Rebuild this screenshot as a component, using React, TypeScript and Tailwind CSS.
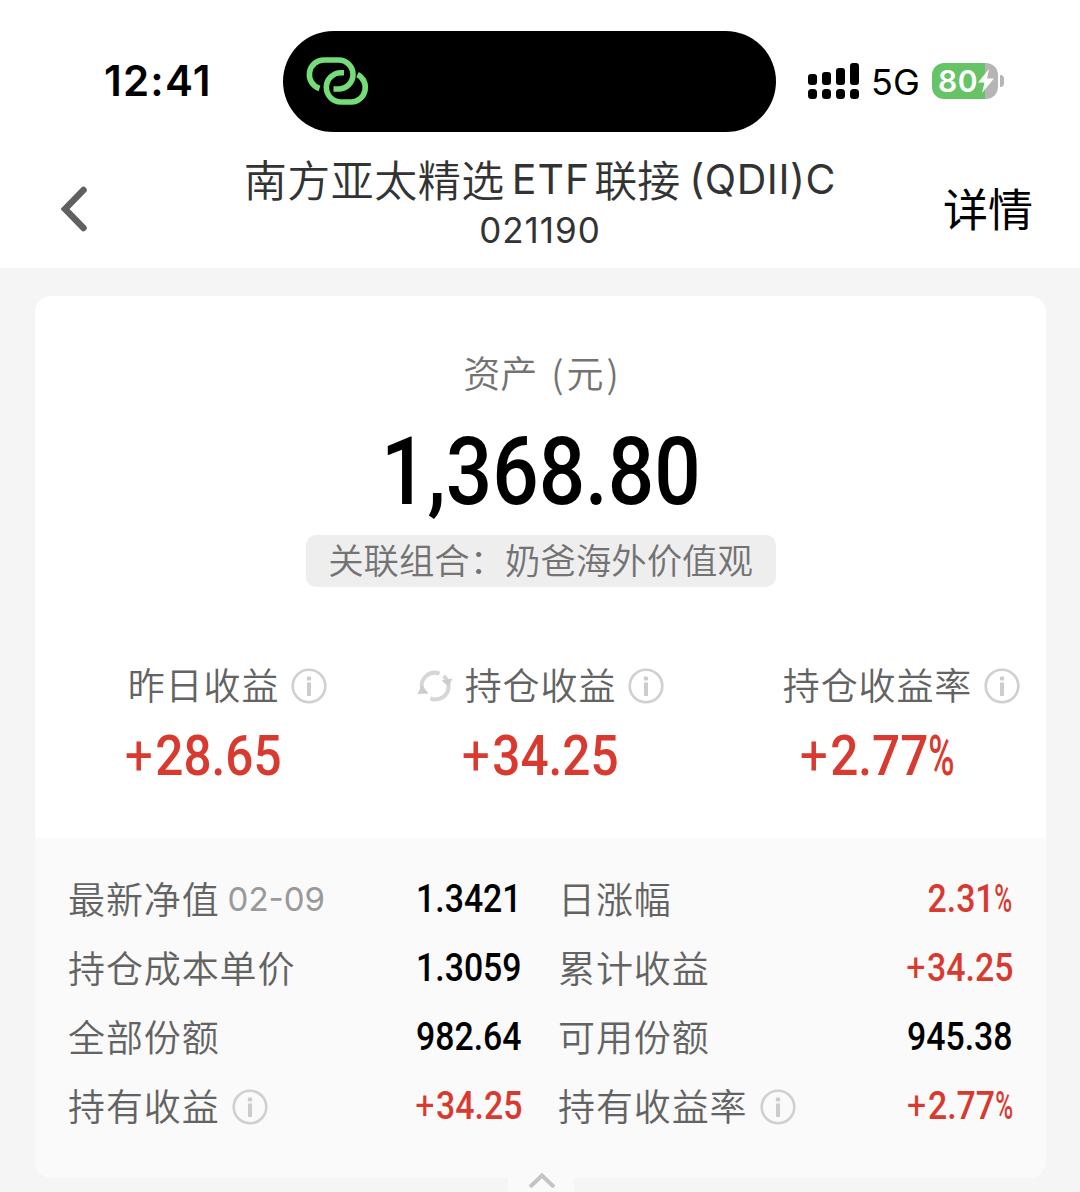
import type { ReactNode } from "react";
import clsx from "clsx";

const metrics = [
  { label: "昨日收益", value: "+28.65", refresh: false },
  { label: "持仓收益", value: "+34.25", refresh: true },
  { label: "持仓收益率", value: "+2.77%", refresh: false },
];

const details = [
  { label: "最新净值", date: "02-09", value: "1.3421" },
  { label: "日涨幅", value: "2.31%", red: true },
  { label: "持仓成本单价", value: "1.3059" },
  { label: "累计收益", value: "+34.25", red: true },
  { label: "全部份额", value: "982.64" },
  { label: "可用份额", value: "945.38" },
  { label: "持有收益", value: "+34.25", red: true, info: true },
  { label: "持有收益率", value: "+2.77%", red: true, info: true },
];

function InfoIcon() {
  return (
    <svg viewBox="0 0 36 36" className="h-9 w-9 shrink-0" fill="none">
      <circle cx="18" cy="18" r="16.3" stroke="#d0d0d0" strokeWidth="2.6" />
      <circle cx="18" cy="10.5" r="2.3" fill="#cccccc" />
      <path d="M16 14.5h4v13.5h-4z" fill="#cccccc" />
    </svg>
  );
}

function RefreshIcon() {
  return (
    <svg viewBox="0 0 36 36" className="h-9 w-9 shrink-0" fill="none">
      <path
        d="M5.4 22A13 13 0 0 1 22.5 5.7"
        stroke="#d6d6d6"
        strokeWidth="4"
      />
      <path
        d="M26.5 8A13 13 0 0 1 13.5 30.3"
        stroke="#d6d6d6"
        strokeWidth="4"
      />
      <path d="M24.5 12.5 35.5 10.5 31.5 18.5z" fill="#cccccc" />
      <path d="M11.5 25.5 .5 26 5 17z" fill="#cccccc" />
    </svg>
  );
}

function LinkIcon() {
  return (
    <svg
      viewBox="0 0 62 50"
      className="h-[50px] w-[62px] overflow-visible"
      fill="none"
      stroke="#74dd78"
      strokeWidth="5.6"
    >
      <path d="M12.5 31.5A14.6 14.6 0 0 1 17 3H31.5A14.5 14.5 0 0 1 31.5 32H26.5" />
      <path d="M37 15.7H34A14.6 14.6 0 0 0 34 45H44.5A14.6 14.6 0 0 0 50.5 17.5" />
    </svg>
  );
}

function Amount({ value, className }: { value: string; className?: string }) {
  const signed = value.startsWith("+");
  const percent = value.endsWith("%");
  const digits = value.replace("+", "").replace("%", "");

  return (
    <span
      className={clsx(
        "inline-block whitespace-nowrap font-['Roboto',sans-serif] font-medium",
        className,
      )}
    >
      {signed && <span className="mr-[0.05em] font-normal">+</span>}
      {digits}
      {percent && (
        <span className="-mr-[0.2em] inline-block origin-left scale-x-72">
          %
        </span>
      )}
    </span>
  );
}

function Label({ children }: { children: ReactNode }) {
  return (
    <span className="relative -top-0.5 whitespace-nowrap text-[37px] leading-[54px] font-[350] tracking-[0.9px] text-[#636363]">
      {children}
    </span>
  );
}

function StatusBar() {
  return (
    <div className="flex h-[132px] pt-[31px]">
      <div className="w-[283px] pt-[25px] pl-[104px] font-['Inter',sans-serif] text-[42px] leading-[50px] font-semibold tracking-[1.2px] text-black">
        12:41
      </div>
      <div className="h-[101px] w-[493px] rounded-full bg-black pt-[26px] pl-6">
        <LinkIcon />
      </div>
      <div className="flex h-[99px] items-center pl-8">
        <svg viewBox="0 0 51 36" className="h-9 w-[51px]" fill="#000">
          <rect x="0" y="11" width="9" height="11" rx="3" />
          <rect x="14" y="9" width="9" height="13" rx="3" />
          <rect x="28" y="5" width="9" height="17" rx="3" />
          <rect x="42" y="0" width="9" height="22" rx="3" />
          <rect x="0" y="26" width="9" height="10" rx="3.5" />
          <rect x="14" y="26" width="9" height="10" rx="3.5" />
          <rect x="28" y="26" width="9" height="10" rx="3.5" />
          <rect x="42" y="26" width="9" height="10" rx="3.5" />
        </svg>
        <span className="ml-3 w-[61px] pt-0.5 font-['Inter',sans-serif] text-[36px] leading-[50px] text-black">
          5G
        </span>
        <div className="flex h-9 w-[66px] items-center overflow-hidden rounded-[12px] bg-linear-to-r from-[#66c466] from-80% to-[#b5b5b5] to-80% pl-1.5 font-['Inter',sans-serif] text-[30px] leading-9 font-semibold tracking-[0.5px] text-white">
          80
          <svg viewBox="0 0 16 24" className="h-6 w-4 shrink-0" fill="#fff">
            <path d="M11 0 0 13.5h6.5L4 24 16 9.5H9z" />
          </svg>
        </div>
        <div className="ml-[2px] h-3 w-1 rounded-r-full bg-[#b5b5b5]" />
      </div>
    </div>
  );
}

function NavBar() {
  return (
    <div className="flex h-[136px] text-[#333]">
      <div className="w-[240px] pt-[54px] pl-[61px]">
        <svg
          viewBox="0 0 28 46"
          className="h-[46px] w-7"
          fill="none"
          stroke="#606060"
          strokeWidth="6.5"
          strokeLinecap="round"
        >
          <path d="M22.5 4 4 23 22.5 42" />
        </svg>
      </div>
      <div className="flex w-[600px] flex-col items-center pt-[17px] font-[380]">
        <div className="flex text-[43px] leading-[58px] whitespace-nowrap">
          <span className="font-[350] tracking-[0.5px]">南方亚太精选</span>
          <span className="ml-[7px] pt-px font-['Inter',sans-serif] text-[41px] tracking-[1px]">
            ETF
          </span>
          <span className="ml-1 font-[350]">联接</span>
          <span className="ml-[9px] pt-px font-['Inter',sans-serif] text-[41px] tracking-[0.6px]">
            (QDII)C
          </span>
        </div>
        <div className="pt-0.5 font-['Inter',sans-serif] text-[35px] leading-10 tracking-[1px]">
          021190
        </div>
      </div>
      <div className="pt-[46px] pl-[103px] text-[45px] leading-[60px] text-black">
        详情
      </div>
    </div>
  );
}

export default function App() {
  return (
    <div className="h-[1192px] w-[1080px] overflow-hidden bg-[#f5f5f5] font-['Noto_Sans_CJK_SC',sans-serif]">
      <header className="bg-white">
        <StatusBar />
        <NavBar />
      </header>

      <main className="mt-7 mr-[34px] ml-[35px]">
        <section className="flex h-[542px] flex-col items-center rounded-t-[16px] bg-white pt-[49px]">
          <div className="pl-1 text-[37px] leading-[54px] font-[350] text-[#737373]">
            资产<span className="ml-3.5 tracking-[3px]">(元)</span>
          </div>
          <div className="mt-[9px] h-[110px] text-[94px] leading-[110px] text-black">
            <Amount value="1,368.80" className="scale-x-87" />
          </div>
          <div className="mt-[17px] h-[52px] w-[470px] rounded-[10px] bg-[#eeeeee] text-center text-[35.4px] leading-[48px] font-[350] whitespace-nowrap text-[#737373]">
            关联组合：奶爸海外价值观
          </div>

          <div className="mt-[72px] grid w-full grid-cols-3">
            {metrics.map((m) => (
              <div key={m.label} className="flex flex-col items-center">
                <div className="grid w-full grid-cols-[1fr_auto_1fr] items-center">
                  <div className="flex justify-end pr-3">
                    {m.refresh && <RefreshIcon />}
                  </div>
                  <Label>{m.label}</Label>
                  <div className="pl-3">
                    <InfoIcon />
                  </div>
                </div>
                <div className="mt-1.5 text-[55px] leading-[64px] text-[#d93a30]">
                  <Amount value={m.value} className="scale-x-90" />
                </div>
              </div>
            ))}
          </div>
        </section>

        <section className="h-[340px] rounded-b-[16px] bg-[#fafafa] px-[33px] pt-[27px]">
          <div className="grid grid-cols-[454px_1fr] gap-x-9">
            {details.map((d) => (
              <div key={d.label} className="flex h-[69px] items-center">
                <Label>{d.label}</Label>
                {d.date && (
                  <span className="ml-2 font-['Inter',sans-serif] text-[33px] text-[#999]">
                    {d.date}
                  </span>
                )}
                {d.info && (
                  <span className="ml-3">
                    <InfoIcon />
                  </span>
                )}
                <div
                  className={clsx(
                    "ml-auto -mt-1 text-[38px] leading-[54px]",
                    d.red ? "text-[#d93a30]" : "text-black",
                  )}
                >
                  <Amount value={d.value} className="origin-right scale-x-89" />
                </div>
              </div>
            ))}
          </div>
        </section>

        {/* collapse handle */}
        <div className="mx-auto flex h-[14px] w-[66px] justify-center bg-[#fafafa]">
          <svg
            viewBox="0 0 28 16"
            className="-mt-1.5 ml-0.5 h-4 w-7"
            fill="none"
            stroke="#c4c4c4"
            strokeWidth="4"
          >
            <path d="M2 15 14 3.5l12 11.5" />
          </svg>
        </div>
      </main>
    </div>
  );
}
